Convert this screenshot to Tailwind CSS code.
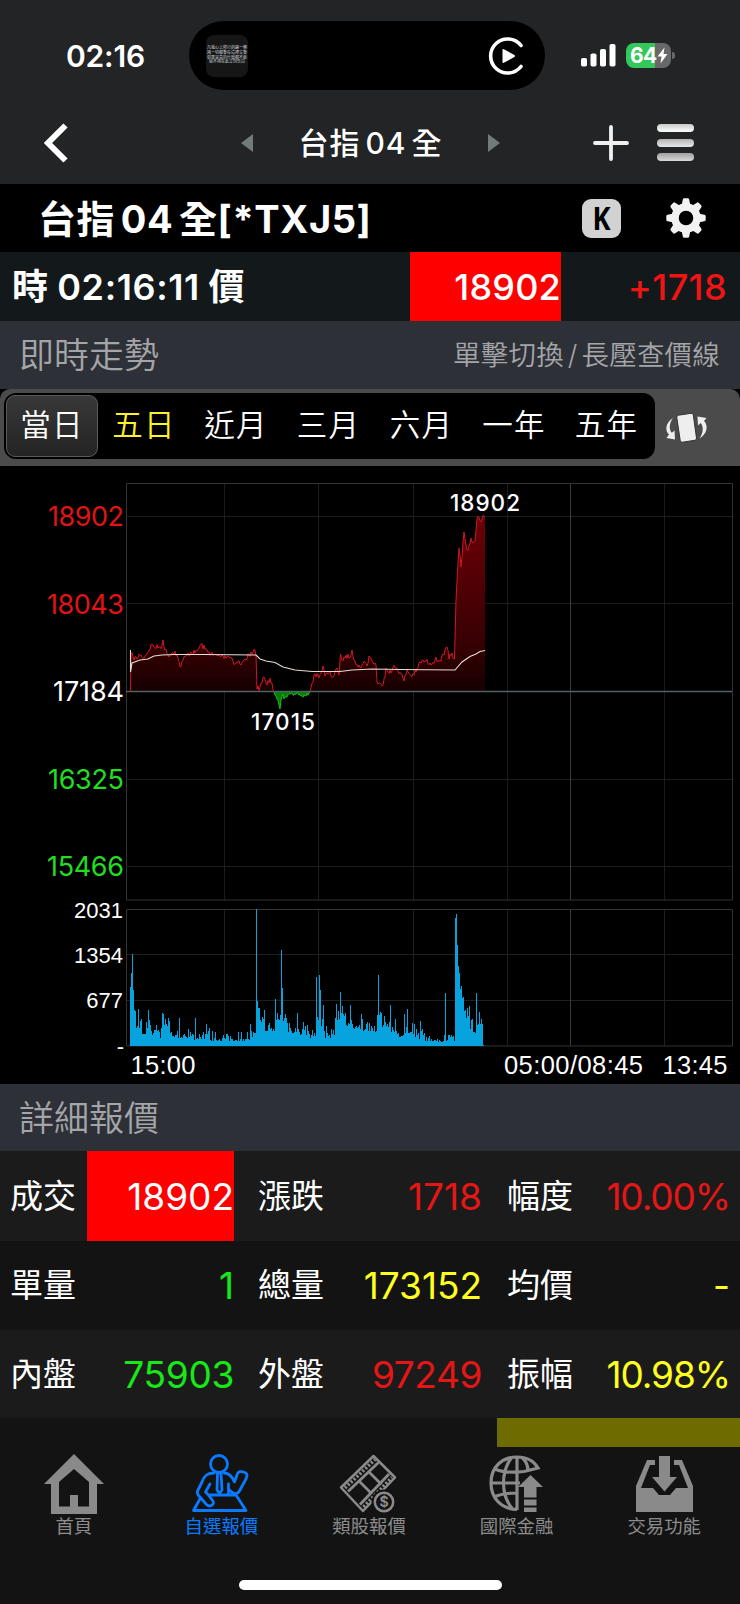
<!DOCTYPE html>
<html lang="zh-Hant">

<head>
    <meta charset="UTF-8">
    <meta name="viewport" content="width=device-width, initial-scale=1.0">
    <title>台指04全</title>
    <script src="https://cdn.jsdelivr.net/npm/@tailwindcss/browser@4"></script>
</head>

<body class="bg-black">
    <div class="w-[740px] h-[1604px] flex flex-col overflow-hidden bg-black text-white font-[Inter,'Noto_Sans_CJK_TC',sans-serif] whitespace-nowrap">

        <!-- Status bar -->
        <div class="h-[111px] shrink-0 bg-[#232425] flex items-center">
            <div class="w-[189px] pl-[66px] text-[30px] leading-none font-semibold tracking-[-0.2px]">02:16</div>
            <div class="w-[356px] h-[69px] rounded-full bg-black flex items-center justify-between pl-[17px] pr-[19px]">
                <div class="w-[42px] h-[42px] rounded-lg bg-[#161616] flex flex-col items-center justify-center text-[4px] leading-[4.8px] text-gray-300">
                    <p>凡我心上所行的路一條</p>
                    <p>過一切都會在這裡交會</p>
                    <p>如果是真的什麼都不能</p>
                    <p>就不用在此立刻告白</p>
                </div>
                <svg class="w-[38px] h-[38px]" viewBox="0 0 38 38" fill="none">
                    <path d="M33 8.5A17 17 0 1 0 33 29.5" stroke="#fff" stroke-width="3.6" stroke-linecap="round" />
                    <path d="M14.5 13v12q0 1.600 1.400 .8l10.500-5.800q1.200-1 0-2L15.900 12.200q-1.400-.8-1.400 .8z" fill="#fff" />
                </svg>
            </div>
            <svg class="w-[35px] h-[23px] ml-[36px]" viewBox="0 0 35 23" fill="#fff">
                <rect x="0" y="14" width="6" height="8.500" rx="1.800" />
                <rect x="9.500" y="9.500" width="6" height="13" rx="1.800" />
                <rect x="19" y="5" width="6" height="17.500" rx="1.800" />
                <rect x="28.500" y="0" width="6" height="22.500" rx="1.800" />
            </svg>
            <div class="w-[45px] h-[25px] ml-[10px] rounded-[8px] bg-linear-to-r from-[#34c759] from-64% to-[#68686a] to-64% flex items-center pl-[4px] text-[21px] leading-none font-bold tracking-[-0.6px]">64
                <svg class="w-[11px] h-[17px] shrink-0" viewBox="0 0 11 17" fill="#fff">
                    <path d="M7.500 0.500L0.500 9.500h4L3.500 16.500L10.500 7h-4z" />
                </svg>
            </div>
            <div class="w-[2.5px] h-[7px] ml-[1px] rounded-r-full bg-[#68686a]"></div>
        </div>

        <!-- Navbar -->
        <div class="h-[73px] shrink-0 bg-[#232425] flex items-center pb-[10px]">
            <svg class="w-[24px] h-[40px] ml-[44px]" viewBox="0 0 24 40" fill="none">
                <path d="M21.500 2.500L4 20L21.500 37.500" stroke="#fff" stroke-width="6" />
            </svg>
            <svg class="w-[12px] h-[18px] ml-[173px]" viewBox="0 0 12 18"><path d="M0 9L12 0v18z" fill="#737a7a" /></svg>
            <div class="w-[235px] pt-px text-center text-[30px] leading-none font-medium tracking-[1px] [word-spacing:-4px]">台指 04 全</div>
            <svg class="w-[12px] h-[18px]" viewBox="0 0 12 18"><path d="M12 9L0 0v18z" fill="#737a7a" /></svg>
            <svg class="w-[36px] h-[36px] ml-[93px]" viewBox="0 0 36 36">
                <path d="M18 2v32M2 18h32" stroke="#f0f0f0" stroke-width="3.800" stroke-linecap="round" />
            </svg>
            <div class="w-[37px] ml-[28px] flex flex-col gap-[6.5px]">
                <div class="h-[8px] rounded-full bg-linear-to-b from-[#c8c8c8] to-[#ffffff]"></div>
                <div class="h-[8px] rounded-full bg-linear-to-b from-[#b4b4b4] to-[#e8e8e8]"></div>
                <div class="h-[8px] rounded-full bg-linear-to-b from-[#a0a0a0] to-[#d8d8d8]"></div>
            </div>
        </div>

        <!-- Symbol -->
        <div class="h-[68px] shrink-0 flex items-center pl-[38px]">
            <h1 class="w-[544px] pt-[2px] text-[38px] leading-none font-bold tracking-[0.6px] [word-spacing:-4px]">台指 04 全[*TXJ5]</h1>
            <div class="w-[39px] h-[39px] rounded-[9px] bg-[#d2d2d2] text-black flex items-center justify-center">
                <span class="text-[32px] leading-none font-bold font-['Noto_Sans'] scale-x-85">K</span>
            </div>
            <svg class="w-[40px] h-[40px] ml-[45px]" viewBox="0 0 40 40" fill="none">
                <circle cx="20" cy="20" r="11" stroke="#f2f2f2" stroke-width="7.500" />
                <g id="gear" fill="#f2f2f2"></g>
            </svg>
        </div>

        <!-- Last price -->
        <div class="h-[69px] shrink-0 bg-[#13181b] flex items-center">
            <div class="w-[410px] pl-[12px] text-[36px] leading-none font-semibold tracking-[0.6px] [word-spacing:-1px]">時 02:16:11 價</div>
            <div class="w-[151px] h-full bg-[#ff0000] flex items-center justify-end text-[36px] font-medium tracking-[0.2px]">18902</div>
            <div class="flex-1 pr-[13px] text-right text-[36px] font-medium text-[#f01414] tracking-[0.4px]">+1718</div>
        </div>

        <div class="h-[68px] shrink-0 bg-[#2d3036] flex items-center justify-between pl-[19px] pr-[20px] text-[#a3a5a8] font-[350]">
            <h2 class="text-[35px] leading-none">即時走勢</h2>
            <p class="pt-[2px] text-[27.5px] leading-none tracking-[0.2px] [word-spacing:-4px]">單擊切換 / 長壓查價線</p>
        </div>

        <!-- Range tabs -->
        <div class="h-[77px] shrink-0 rounded-t-[10px] bg-[#4b4b4b] flex items-center pl-[4px] pb-[4px]">
            <div class="w-[651px] h-[66px] rounded-[12px] bg-black flex items-center pl-[2px] text-[30.5px] leading-none font-[350] tracking-[1.2px]">
                <div class="w-[92px] h-[62px] rounded-[9px] border border-[#5a5a5a] bg-linear-to-b from-[#383838] to-[#242424] flex items-center justify-center">當日</div>
                <div class="w-[92px] text-center text-[#fff02c]">五日</div>
                <div class="w-[92px] text-center">近月</div>
                <div class="w-[93px] text-center">三月</div>
                <div class="w-[93px] text-center">六月</div>
                <div class="w-[92px] text-center">一年</div>
                <div class="w-[93px] text-center">五年</div>
            </div>
            <svg class="w-[42px] h-[32px] ml-[10px] mt-[4px]" viewBox="0 0 42 32">
                <path d="M13.500 3.200L26 1.300q2-.3 2.300 1.700L31.500 26q.3 2-1.700 2.300L17.500 30.200q-2 .3-2.300-1.700L11.800 5.500q-.3-2 1.700-2.300z" fill="#eee" stroke="#333" stroke-width="1" />
                <path d="M8 6C0 11 0 19 4 22.500L1.500 26 10 27.500 9.500 18.500 6.800 20.800C3.500 17 4.500 10.500 8 6z" fill="#eee" />
                <path d="M34.500 26.500C43 21.500 43 12.500 39 9L41.500 6 32.500 4.500 33 13.500 35.700 11C39 15 38 21.500 34.500 26.500z" fill="#eee" />
            </svg>
        </div>

        <!-- Chart -->
        <svg class="w-[740px] h-[618px] shrink-0" viewBox="0 466 740 618">
            <defs>
                <linearGradient id="up" gradientUnits="userSpaceOnUse" x1="0" y1="517" x2="0" y2="692">
                    <stop offset="0" stop-color="#6c0006" />
                    <stop offset="0.750" stop-color="#350003" />
                    <stop offset="1" stop-color="#160001" />
                </linearGradient>
            </defs>
            <path d="M126 516.500H732M126 603.500H732M126 779.500H732M126 866.500H732M224.500 483V900M318.500 483V900M413.500 483V900M507.500 483V900M664.500 483V900" stroke="#1c1c1c" />
            <path d="M126 954.500H732M126 1000.500H732M224.500 909V1046M318.500 909V1046M413.500 909V1046M507.500 909V1046M664.500 909V1046" stroke="#202020" />
            <path d="M570.500 483V900M570.500 909V1046" stroke="#3c3c3c" />
            <path d="M126.500 483.500H732.500V900H126.500zM126.500 909.500H732.500V1046H126.500z" fill="none" stroke="#333" />
            <path id="area" fill="url(#up)" />
            <path id="areaDown" fill="#0a7a0a" />
            <path d="M126 691.500H732" stroke="#4c6466" stroke-width="1.300" />
            <path id="price" fill="none" stroke="#d01824" stroke-width="1" />
            <path id="priceDown" fill="none" stroke="#14c014" stroke-width="1" />
            <path d="M130.500 650V672L132 663 140 660 148 659 154 656 162 655 175 654.500 205 654.500 256 655 260 659 266 661 275 662.500 283 667 295 670 312 671.500 340 671.500 352 670 372 669 400 669.500 455 670 462 662 470 656.500 476 654 480 651.500 485 650.500" fill="none" stroke="#e8dcd4" stroke-width="1.100" />
            <path id="volume" stroke="#06a3de" stroke-width="1" shape-rendering="crispEdges" />

            <g class="text-[27px]" text-anchor="end">
                <text x="124" y="526" fill="#e01414" textLength="76">18902</text>
                <text x="124" y="613.500" fill="#e01414" textLength="77">18043</text>
                <text x="124" y="701" fill="#fff" textLength="71">17184</text>
                <text x="124" y="788.500" fill="#22dd22" textLength="76">16325</text>
                <text x="124" y="875.500" fill="#22dd22" textLength="77">15466</text>
            </g>
            <g class="text-[22.5px] font-medium" fill="#fff">
                <text x="450" y="510.500" textLength="70">18902</text>
                <text x="251" y="730" textLength="64">17015</text>
            </g>
            <g class="text-[22px] font-['Liberation_Sans']" fill="#fff" text-anchor="end">
                <text x="123" y="917.500">2031</text>
                <text x="123" y="962.500">1354</text>
                <text x="123" y="1008">677</text>
                <text x="124" y="1054">-</text>
            </g>
            <g class="text-[25.5px] font-['Liberation_Sans']" fill="#fff">
                <text x="130.500" y="1074" textLength="65">15:00</text>
                <text x="504" y="1074" textLength="139">05:00/08:45</text>
                <text x="662.500" y="1074" textLength="65">13:45</text>
            </g>
        </svg>

        <div class="h-[67px] shrink-0 bg-[#2d3036] flex items-center pl-[19px] pt-[2px] text-[#a3a5a8]">
            <h2 class="text-[35px] leading-none font-[350]">詳細報價</h2>
        </div>

        <!-- Quote table -->
        <div class="shrink-0 text-[37px] leading-none">
            <div class="h-[90px] bg-[#1b1b1b] flex items-center">
                <div class="w-[87px] pl-[10px] text-[33px]">成交</div>
                <div class="w-[147px] h-full bg-[#ff0000] flex items-center justify-end">18902</div>
                <div class="w-[120px] pl-[24px] text-[33px]">漲跌</div>
                <div class="w-[128px] text-right text-[#e51616]">1718</div>
                <div class="w-[110px] pl-[25px] text-[33px]">幅度</div>
                <div class="w-[138px] text-right text-[#e51616] tracking-[-1.1px]">10.00%</div>
            </div>
            <div class="h-[89px] bg-[#131313] flex items-center">
                <div class="w-[87px] pl-[10px] text-[33px]">單量</div>
                <div class="w-[147px] text-right text-[#18e818]">1</div>
                <div class="w-[120px] pl-[24px] text-[33px]">總量</div>
                <div class="w-[128px] text-right text-[#ffff20]">173152</div>
                <div class="w-[110px] pl-[25px] text-[33px]">均價</div>
                <div class="w-[138px] text-right text-[#ffff20]">-</div>
            </div>
            <div class="h-[88px] bg-[#1b1b1b] flex items-center">
                <div class="w-[87px] pl-[10px] text-[33px]">內盤</div>
                <div class="w-[147px] text-right text-[#18e818] tracking-[-0.3px]">75903</div>
                <div class="w-[120px] pl-[24px] text-[33px]">外盤</div>
                <div class="w-[128px] text-right text-[#e51616] tracking-[-0.4px]">97249</div>
                <div class="w-[110px] pl-[25px] text-[33px]">振幅</div>
                <div class="w-[138px] text-right text-[#ffff20] tracking-[-1.1px]">10.98%</div>
            </div>
        </div>

        <!-- Tab bar -->
        <div class="flex-1 bg-[#131313] flex flex-col items-center">
            <div class="w-[243px] h-[29px] self-end bg-[#6e6b00]"></div>
            <div class="w-[738px] self-start mt-[6px] grid grid-cols-5 text-[#8c8c8c] text-[18.4px] leading-none text-center">
                <div class="flex flex-col items-center gap-[2px]">
                    <svg class="w-[62px] h-[62px]" viewBox="0 0 62 62" fill="#8a8a8a">
                        <path fill-rule="evenodd" d="M31 1L61 31H54V61H8V31H1zM31 16L16 29V53.500H27V42H35V53.500H46V29z" />
                    </svg>
                    <span>首頁</span>
                </div>
                <div class="flex flex-col items-center gap-[2px] text-[#0a7aff]">
                    <svg class="w-[62px] h-[62px]" viewBox="0 0 62 62" fill="none" stroke="#0a7aff" stroke-width="2.800" stroke-linejoin="round" stroke-linecap="round">
                        <circle cx="29" cy="11" r="8.500" />
                        <path d="M24 20C17 20 14 23 12 29L7.500 38C6.500 41 8 42 10 44L16 51C19 55 25 52 23 48L18 41.500 15.500 39 20 31" />
                        <path d="M34 20C39 20 42 23 44.500 29L47 22C48 18 51 18 55 19.500C58 20.500 57 23 56 26L50 37C48 41 45 42 41 38.500L38.500 36V31M38.500 36V42M20 42H46L56 57.500H3.500L10.500 45" />
                        <path d="M27.500 20H31L32 37 29.500 40.500 27 37z" />
                    </svg>
                    <span>自選報價</span>
                </div>
                <div class="flex flex-col items-center gap-[2px]">
                    <svg class="w-[62px] h-[62px]" viewBox="0 0 62 62" fill="none" stroke="#8a8a8a">
                        <path d="M3 34.500L35.500 3 57 24.500 25 58z" stroke-width="2.500" stroke-linejoin="round" />
                        <path d="M7 35L37 6.500M25.500 54L54 24.500" stroke-width="3.500" stroke-dasharray="2.200 1.800" />
                        <path d="M10 38.500L40.500 9.500M22 51.500L51 21M21 28L34 41M31 19L43.500 31.500" stroke-width="2.800" />
                        <circle cx="46" cy="49" r="12.500" fill="#131313" stroke="none" />
                        <circle cx="46" cy="49" r="9.200" stroke-width="2.500" />
                        <text x="46" y="54" text-anchor="middle" fill="#8a8a8a" stroke="none" font-size="14" font-weight="700">$</text>
                    </svg>
                    <span>類股報價</span>
                </div>
                <div class="flex flex-col items-center gap-[2px]">
                    <svg class="w-[62px] h-[62px]" viewBox="0 0 62 62" fill="none" stroke="#8a8a8a" stroke-width="3.200">
                        <path d="M31 56.500C15 56 5 45 5 30C5 14 16 4 31 4C41 4 48 8 52 15L38 18.500M31 4V57M5 30H34M9 16C16 19.500 24 20 38 18.500M9 43.500C15 41 22 40 31 40M26 4C15 18 14 42 27 56.500M36 4.500C40 8 42 14 42 18" />
                        <path d="M44.500 22L57 34H50.500V59H38V34H32z" fill="#8a8a8a" stroke="none" />
                        <path d="M37 45.500H51M37 53.500H51" stroke="#131313" stroke-width="2" />
                    </svg>
                    <span>國際金融</span>
                </div>
                <div class="flex flex-col items-center gap-[2px]">
                    <svg class="w-[62px] h-[62px]" viewBox="0 0 62 62" fill="#8a8a8a">
                        <path d="M3 33L14 7H22V12H17L8 35H20L26 42H37L43 35H55L46 12H41V7H49L60 33V59H3z" />
                        <path d="M26 3H37V24H44L31.500 38.500 19 24H26z" />
                    </svg>
                    <span>交易功能</span>
                </div>
            </div>
            <div class="w-[263px] h-[10px] mt-[45px] rounded-full bg-white"></div>
        </div>
    </div>

    <script>
        // gear teeth, one every 45 degrees
        let teeth = '';
        for (let i = 0; i < 8; i++) {
            teeth += `<path d="M15.500 8L16.800 1.500Q17 .3 18.300 .3h3.400Q23 .3 23.200 1.500L24.500 8z" transform="rotate(${i * 45} 20 20)"/>`;
        }
        document.getElementById('gear').innerHTML = teeth;

        let seed = 7;
        function rand() {
            seed = (seed * 16807) % 2147483647;
            return seed / 2147483647;
        }

        // add small ticks between the key points
        function jitter(points, amount) {
            const out = [points[0]];
            for (let i = 1; i < points.length; i++) {
                const [x0, y0] = points[i - 1];
                const [x1, y1] = points[i];
                const n = Math.floor((x1 - x0) / 1.0);
                for (let k = 1; k < n; k++) {
                    const t = k / n;
                    out.push([x0 + (x1 - x0) * t, y0 + (y1 - y0) * t + (rand() - 0.5) * amount]);
                }
                out.push(points[i]);
            }
            return out;
        }

        const night = [[130.5, 692], [131, 654], [133, 657], [137, 659], [139, 654], [142, 657], [145, 656], [149, 650], [152, 644], [154, 647], [160, 647], [162, 645], [163, 640], [165, 650], [168, 655], [172, 653], [175, 651], [178, 658], [180, 667], [183, 660], [187, 655], [191, 652], [195, 653], [199, 648], [201, 644], [205, 649], [209, 652], [213, 655], [218, 656], [223, 656], [228, 656], [232, 658], [235, 664], [238, 661], [241, 665], [245, 659], [249, 655], [252, 654], [255, 650], [256, 656], [257, 689], [260, 687], [264, 677], [267, 685], [270, 678], [272, 683], [274, 692]];
        const dip = [[274, 692], [276, 696], [278, 700], [280, 709], [281, 700], [283, 694], [284, 699], [287, 697], [291, 693], [293, 695], [298, 693], [301, 696], [306, 696], [309, 693], [310, 692]];
        const late = [[310, 691], [312, 683], [315, 674], [318, 676], [321, 673], [323, 666], [325, 676], [329, 673], [333, 677], [336, 669], [339, 675], [340.5, 654], [343, 661], [346, 655], [349, 658], [352, 650], [355, 661], [358, 667], [362, 665], [365, 662], [367, 666], [369, 656], [373, 662], [376, 665], [377, 682], [382, 686], [384, 679], [386, 668], [391, 673], [393, 667], [397, 668], [401, 674], [404, 681], [407, 670], [411, 676], [416, 672], [420, 662], [425, 661], [430, 663], [435, 660], [440, 660], [444, 655], [447, 647], [449, 659], [452, 653], [454.5, 659], [456, 600], [459, 548], [461, 567], [464, 532], [466, 545], [468, 550], [471, 538], [473, 543], [475, 541], [477, 519], [482, 519], [484, 516], [485, 517]];

        const toPath = (p) => 'M' + p.map((q) => q.join(' ')).join('L');
        const a = jitter(night, 6);
        const b = jitter(dip, 3);
        const c = jitter(late, 6);
        document.getElementById('price').setAttribute('d', toPath(a) + toPath(c));
        document.getElementById('area').setAttribute('d', toPath(a) + 'V692H130.5z' + toPath(c) + 'V692H310z');
        document.getElementById('priceDown').setAttribute('d', toPath(b));
        document.getElementById('areaDown').setAttribute('d', toPath(b) + 'z');

        // volume: [x, body height, noise]
        const body = [[130, 34, 8], [133, 28, 12], [136, 18, 14], [142, 12, 12], [152, 8, 12], [162, 18, 14], [170, 8, 9], [180, 8, 14], [190, 6, 8], [200, 6, 11], [210, 5, 8], [222, 5, 7], [235, 5, 9], [255, 5, 9], [257, 36, 6], [260, 22, 10], [265, 15, 8], [272, 13, 8], [276, 24, 10], [283, 22, 12], [288, 13, 13], [300, 10, 12], [308, 8, 9], [316, 20, 16], [324, 8, 10], [332, 9, 10], [335, 26, 14], [341, 30, 12], [346, 17, 8], [352, 17, 14], [362, 15, 12], [372, 13, 8], [377, 28, 10], [382, 19, 10], [391, 14, 14], [396, 9, 10], [405, 10, 12], [415, 6, 9], [421, 11, 8], [425, 5, 5], [438, 4, 6], [448, 9, 12], [454, 5, 5], [455, 115, 12], [456, 118, 8], [457, 88, 6], [458, 74, 10], [460, 48, 12], [463, 34, 18], [466, 28, 14], [470, 16, 12], [473, 13, 6], [476, 18, 7], [479, 22, 12], [482, 18, 6], [483, 1, 1]];
        const spikes = { 130: 59, 131: 73, 132: 92, 133: 56, 135: 35, 138: 37, 148: 36, 162: 33, 165: 27, 179: 28, 195: 28, 206: 22, 250: 22, 256: 137, 257: 45, 259: 38, 264: 36, 275: 47, 277: 33, 281: 96, 282: 58, 285: 32, 297: 33, 303: 24, 316: 69, 319: 71, 320: 56, 323: 41, 336: 42, 340: 54, 342: 40, 350: 41, 378: 71, 384: 30, 390: 41, 404: 32, 407: 37, 420: 25, 445: 53, 455: 128, 456: 132, 457: 101, 459: 73, 461: 60, 463: 49, 469: 40, 476: 53 };
        let bars = '';
        for (let x = 130, i = 0; x < 484; x++) {
            while (i < body.length - 1 && body[i + 1][0] <= x) i++;
            const h = spikes[x] || body[i][1] + rand() * rand() * body[i][2] * 1.4;
            bars += `M${x + 0.5} 1046v${-h.toFixed(1)}`;
        }
        document.getElementById('volume').setAttribute('d', bars);
    </script>
</body>

</html>
